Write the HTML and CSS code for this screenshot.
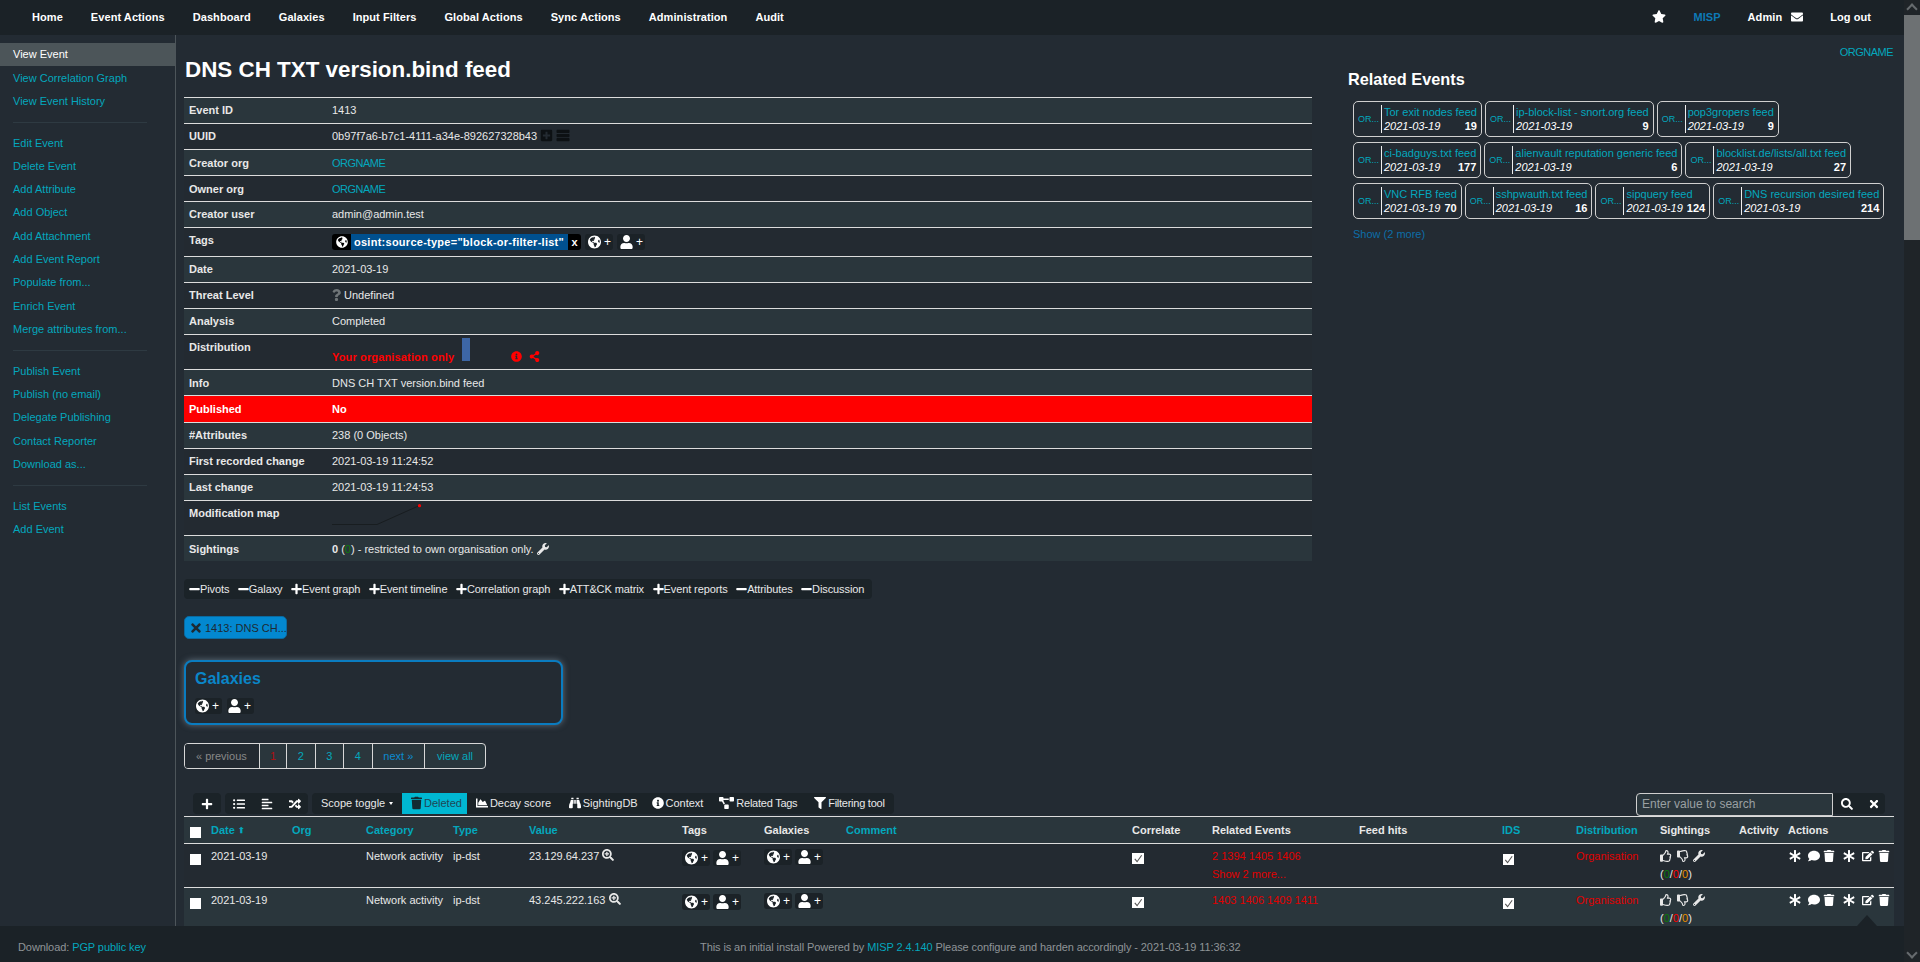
FILE: index.html
```html
<!DOCTYPE html>
<html lang="en">
<head>
<meta charset="utf-8">
<title>MISP - Event 1413</title>
<link rel="stylesheet" href="styles.css">
</head>
<body>
<svg class="defs" aria-hidden="true">
<symbol id="plus" viewBox="0 0 448 512"><path d="M416 208H272V64c0-17.67-14.33-32-32-32h-32c-17.67 0-32 14.33-32 32v144H32c-17.67 0-32 14.33-32 32v32c0 17.67 14.33 32 32 32h144v144c0 17.67 14.33 32 32 32h32c17.67 0 32-14.33 32-32V304h144c17.67 0 32-14.33 32-32v-32c0-17.67-14.33-32-32-32z"/></symbol>
<symbol id="minus" viewBox="0 0 448 512"><path d="M416 208H32c-17.67 0-32 14.33-32 32v32c0 17.67 14.33 32 32 32h384c17.67 0 32-14.33 32-32v-32c0-17.67-14.33-32-32-32z"/></symbol>
<symbol id="user" viewBox="0 0 448 512"><path d="M224 256c70.7 0 128-57.3 128-128S294.7 0 224 0 96 57.3 96 128s57.3 128 128 128zm89.6 32h-16.7c-22.2 10.2-46.9 16-72.9 16s-50.6-5.8-72.9-16h-16.7C60.2 288 0 348.2 0 422.4V464c0 26.5 21.5 48 48 48h352c26.5 0 48-21.5 48-48v-41.6c0-74.2-60.2-134.4-134.4-134.4z"/></symbol>
<symbol id="globe" viewBox="0 0 496 512"><path d="M248 8C111.03 8 0 119.03 0 256s111.03 248 248 248 248-111.03 248-248S384.97 8 248 8zm82.29 357.6c-3.9 3.88-7.99 7.95-11.31 11.28-2.99 3-5.1 6.7-6.17 10.71-1.51 5.66-2.73 11.38-4.77 16.87l-17.39 46.85c-13.76 3-28 4.69-42.65 4.69v-27.38c1.69-12.62-7.64-36.26-22.63-51.25-6-6-9.37-14.14-9.37-22.63v-32.01c0-11.64-6.27-22.34-16.46-27.97-14.37-7.95-34.81-19.06-48.81-26.11-11.48-5.78-22.1-13.14-31.65-21.75l-.8-.72a114.792 114.792 0 0 1-18.06-20.74c-9.38-13.77-24.66-36.42-34.59-51.14 20.47-45.5 57.36-82.04 103.2-101.89l24.01 12.01C203.48 89.74 216 82.01 216 70.11v-11.3c7.99-1.29 16.12-2.11 24.39-2.42l28.3 28.3c6.25 6.25 6.25 16.38 0 22.63L264 112l-10.34 10.34c-3.12 3.12-3.12 8.19 0 11.31l4.69 4.69c3.12 3.12 3.12 8.19 0 11.31l-8 8a8.008 8.008 0 0 1-5.66 2.34h-8.99c-2.08 0-4.08.81-5.58 2.27l-9.92 9.65a8.008 8.008 0 0 0-1.58 9.31l15.59 31.19c2.66 5.32-1.21 11.58-7.15 11.58h-5.64c-1.93 0-3.79-.7-5.24-1.96l-9.28-8.06a16.017 16.017 0 0 0-15.55-3.1l-31.17 10.39a11.95 11.95 0 0 0-8.17 11.34c0 4.53 2.56 8.66 6.61 10.69l11.08 5.54c9.41 4.71 19.79 7.16 30.31 7.16s22.59 27.29 32 32h66.75c8.49 0 16.62 3.37 22.63 9.37l13.69 13.69a30.503 30.503 0 0 1 8.93 21.57 46.536 46.536 0 0 1-13.72 32.98zM417 274.25c-5.79-1.45-10.84-5-14.15-9.97l-17.98-26.97a23.97 23.97 0 0 1 0-26.62l19.59-29.38c2.32-3.47 5.5-6.29 9.24-8.15l12.98-6.49C440.2 193.59 448 223.87 448 256c0 8.67-.74 17.16-1.82 25.54L417 274.25z"/></symbol>
<symbol id="star" viewBox="0 0 576 512"><path d="M259.3 17.8L194 150.2 47.9 171.5c-26.2 3.8-36.7 36.1-17.7 54.6l105.7 103-25 145.5c-4.5 26.3 23.2 46 46.4 33.7L288 439.6l130.7 68.7c23.2 12.2 50.9-7.4 46.4-33.7l-25-145.5 105.7-103c19-18.5 8.5-50.8-17.7-54.6L382 150.2 316.7 17.8c-11.7-23.6-45.6-23.9-57.4 0z"/></symbol>
<symbol id="envelope" viewBox="0 0 512 512"><path d="M502.3 190.8c3.9-3.1 9.7-.2 9.7 4.7V400c0 26.5-21.5 48-48 48H48c-26.5 0-48-21.5-48-48V195.6c0-5 5.7-7.8 9.7-4.7 22.4 17.4 52.1 39.5 154.1 113.6 21.1 15.4 56.7 47.8 92.2 47.6 35.7.3 72-32.8 92.3-47.6 102-74.1 131.6-96.3 154-113.7zM256 320c23.2.4 56.6-29.2 73.4-41.4 132.7-96.3 142.8-104.7 173.4-128.7 5.8-4.5 9.2-11.5 9.2-18.9v-19c0-26.5-21.5-48-48-48H48C21.5 64 0 85.5 0 112v19c0 7.4 3.4 14.3 9.2 18.9 30.6 23.9 40.7 32.4 173.4 128.7 16.8 12.2 50.2 41.8 73.4 41.4z"/></symbol>
<symbol id="info" viewBox="0 0 512 512"><path d="M256 8C119 8 8 119 8 256s111 248 248 248 248-111 248-248S393 8 256 8zm0 110c23.2 0 42 18.8 42 42s-18.8 42-42 42-42-18.8-42-42 18.8-42 42-42zm56 254c0 6.6-5.4 12-12 12h-88c-6.6 0-12-5.4-12-12v-24c0-6.6 5.4-12 12-12h12v-64h-12c-6.6 0-12-5.4-12-12v-24c0-6.6 5.4-12 12-12h64c6.6 0 12 5.4 12 12v100h12c6.6 0 12 5.4 12 12v24z"/></symbol>
<symbol id="share" viewBox="0 0 448 512"><path d="M352 320c-22.6 0-43.4 7.8-59.8 20.9l-102.5-64.1a96.6 96.6 0 0 0 0-41.7l102.5-64.1C308.6 184.2 329.4 192 352 192c53 0 96-43 96-96S405 0 352 0s-96 43-96 96c0 7.2.8 14.1 2.3 20.8L155.8 181C139.4 167.8 118.6 160 96 160c-53 0-96 43-96 96s43 96 96 96c22.6 0 43.4-7.8 59.8-20.9l102.5 64.1A96.3 96.3 0 0 0 256 416c0 53 43 96 96 96s96-43 96-96-43-96-96-96z"/></symbol>
<symbol id="wrench" viewBox="0 0 512 512"><path d="M507.73 109.1c-2.24-9.03-13.54-12.09-20.12-5.51l-74.36 74.36-67.88-11.31-11.31-67.88 74.36-74.36c6.62-6.62 3.43-17.9-5.66-20.16-47.38-11.74-99.55.91-136.58 37.93-39.64 39.64-50.55 97.1-34.05 147.2L18.74 402.76c-24.99 24.99-24.99 65.51 0 90.5 24.99 24.99 65.51 24.99 90.5 0l213.21-213.21c50.12 16.71 107.47 5.68 147.37-34.22 37.07-37.07 49.7-89.32 37.91-136.73zM64 472c-13.25 0-24-10.75-24-24 0-13.26 10.75-24 24-24s24 10.74 24 24c0 13.25-10.75 24-24 24z"/></symbol>
<symbol id="trash" viewBox="0 0 448 512"><path d="M432 32H312l-9.4-18.7A24 24 0 0 0 281.1 0H166.8a23.72 23.72 0 0 0-21.4 13.3L136 32H16A16 16 0 0 0 0 48v32a16 16 0 0 0 16 16h416a16 16 0 0 0 16-16V48a16 16 0 0 0-16-16zM53.2 467a48 48 0 0 0 47.9 45h245.8a48 48 0 0 0 47.9-45L416 128H32z"/></symbol>
<symbol id="asterisk" viewBox="0 0 512 512"><path d="M478.21 334.093L336 256l142.21-78.093c11.795-6.477 15.961-21.384 9.232-33.037l-19.48-33.741c-6.728-11.653-21.72-15.499-33.227-8.523L296 186.718l3.475-162.204C299.763 11.061 288.937 0 275.48 0h-38.96c-13.456 0-24.283 11.061-23.994 24.514L216 186.718 77.265 102.607c-11.506-6.976-26.499-3.13-33.227 8.523l-19.48 33.741c-6.728 11.653-2.562 26.56 9.233 33.037L176 256 33.79 334.093c-11.795 6.477-15.961 21.384-9.232 33.037l19.48 33.741c6.728 11.653 21.721 15.499 33.227 8.523L216 325.282l-3.475 162.204C212.237 500.939 223.064 512 236.52 512h38.961c13.456 0 24.283-11.061 23.995-24.514L296 325.282l138.735 84.111c11.506 6.976 26.499 3.13 33.227-8.523l19.48-33.741c6.728-11.653 2.563-26.559-9.232-33.036z"/></symbol>
<symbol id="comment" viewBox="0 0 512 512"><path d="M256 32C114.6 32 0 125.1 0 240c0 49.6 21.4 95 57 130.7C44.5 421.1 2.7 466 2.2 466.5c-2.2 2.3-2.8 5.7-1.5 8.7S4.8 480 8 480c66.3 0 116-31.8 140.6-51.4 32.7 12.3 69 19.4 107.4 19.4 141.4 0 256-93.1 256-208S397.4 32 256 32z"/></symbol>
<symbol id="edit" viewBox="0 0 576 512"><path d="M402.6 83.2l90.2 90.2c3.8 3.8 3.8 10 0 13.8L274.4 405.6l-92.8 10.3c-12.4 1.4-22.9-9.1-21.5-21.5l10.3-92.8L388.8 83.2c3.8-3.8 10-3.8 13.8 0zm162-22.9l-48.8-48.8c-15.2-15.2-39.9-15.2-55.2 0l-35.4 35.4c-3.8 3.8-3.8 10 0 13.8l90.2 90.2c3.8 3.8 10 3.8 13.8 0l35.4-35.4c15.2-15.3 15.2-40 0-55.2zM384 346.2V448H64V128h229.8c3.2 0 6.2-1.3 8.5-3.5l40-40c7.6-7.6 2.2-20.5-8.5-20.5H48C21.5 64 0 85.5 0 112v352c0 26.5 21.5 48 48 48h352c26.5 0 48-21.5 48-48V306.2c0-10.7-12.9-16-20.5-8.5l-40 40c-2.2 2.3-3.5 5.3-3.5 8.5z"/></symbol>
<symbol id="search" viewBox="0 0 512 512"><path d="M505 442.7L405.3 343c-4.5-4.5-10.6-7-17-7H372c27.6-35.3 44-79.7 44-128C416 93.1 322.9 0 208 0S0 93.1 0 208s93.1 208 208 208c48.3 0 92.7-16.4 128-44v16.3c0 6.4 2.5 12.5 7 17l99.7 99.7c9.4 9.4 24.6 9.4 33.9 0l28.3-28.3c9.4-9.4 9.4-24.6.1-34zM208 336c-70.7 0-128-57.2-128-128 0-70.7 57.2-128 128-128 70.7 0 128 57.2 128 128 0 70.7-57.2 128-128 128z"/></symbol>
<symbol id="searchplus" viewBox="0 0 512 512"><path d="M304 192v32c0 6.6-5.4 12-12 12h-56v56c0 6.6-5.4 12-12 12h-32c-6.6 0-12-5.4-12-12v-56h-56c-6.6 0-12-5.4-12-12v-32c0-6.6 5.4-12 12-12h56v-56c0-6.6 5.4-12 12-12h32c6.6 0 12 5.4 12 12v56h56c6.6 0 12 5.4 12 12zm201 284.7L476.7 505c-9.4 9.4-24.6 9.4-33.9 0L343 405.3c-4.5-4.5-7-10.6-7-17V372c-35.3 27.6-79.7 44-128 44C93.1 416 0 322.9 0 208S93.1 0 208 0s208 93.1 208 208c0 48.3-16.4 92.7-44 128h16.3c6.4 0 12.5 2.5 17 7l99.7 99.7c9.3 9.4 9.3 24.6 0 34zM344 208c0-75.2-60.8-136-136-136S72 132.8 72 208s60.8 136 136 136 136-60.8 136-136z"/></symbol>
<symbol id="times" viewBox="0 0 352 512"><path d="M242.72 256l100.07-100.07c12.28-12.28 12.28-32.19 0-44.48l-22.24-22.24c-12.28-12.28-32.19-12.28-44.48 0L176 189.28 75.93 89.21c-12.28-12.28-32.19-12.28-44.48 0L9.21 111.45c-12.28 12.28-12.28 32.19 0 44.48L109.28 256 9.21 356.07c-12.28 12.28-12.28 32.19 0 44.48l22.24 22.24c12.28 12.28 32.2 12.28 44.48 0L176 322.72l100.07 100.07c12.28 12.28 32.2 12.28 44.48 0l22.24-22.24c12.28-12.28 12.28-32.19 0-44.48L242.72 256z"/></symbol>
<symbol id="random" viewBox="0 0 512 512"><path d="M504.971 359.029c9.373 9.373 9.373 24.569 0 33.941l-80 79.984c-15.01 15.01-40.971 4.49-40.971-16.971V416h-58.785a12.004 12.004 0 0 1-8.773-3.812l-70.556-75.596 53.333-57.143L352 336h32v-39.981c0-21.438 25.943-31.998 40.971-16.971l80 79.981zM12 176h84l52.781 56.551 53.333-57.143-70.556-75.596A11.999 11.999 0 0 0 122.785 96H12c-6.627 0-12 5.373-12 12v56c0 6.627 5.373 12 12 12zm372 0v39.984c0 21.46 25.961 31.98 40.971 16.971l80-79.984c9.373-9.373 9.373-24.569 0-33.941l-80-79.981C409.943 24.021 384 34.582 384 56.019V96h-58.785a12.004 12.004 0 0 0-8.773 3.812L96 336H12c-6.627 0-12 5.373-12 12v56c0 6.627 5.373 12 12 12h110.785c3.326 0 6.503-1.381 8.773-3.812L352 176h32z"/></symbol>
<symbol id="filter" viewBox="0 0 512 512"><path d="M487.976 0H24.028C2.71 0-8.047 25.866 7.058 40.971L192 225.941V432c0 7.831 3.821 15.17 10.237 19.662l80 55.98C298.02 518.69 320 507.493 320 487.98V225.941l184.947-184.97C520.021 25.896 509.338 0 487.976 0z"/></symbol>
<symbol id="chart" viewBox="0 0 512 512"><path d="M500 384c6.6 0 12 5.4 12 12v40c0 6.6-5.4 12-12 12H12c-6.6 0-12-5.4-12-12V76c0-6.6 5.4-12 12-12h40c6.6 0 12 5.4 12 12v308h436zM372.7 159.5L288 216l-85.3-113.7c-5.1-6.8-15.5-6.3-19.9 1L96 248v104h384l-89.9-187.8c-3.2-6.5-11.4-8.7-17.4-4.7z"/></symbol>
<symbol id="binoculars" viewBox="0 0 512 512"><path d="M416 48c0-8.84-7.16-16-16-16h-64c-8.84 0-16 7.16-16 16v48h96V48zM63.91 159.99C61.4 253.84 3.46 274.22 0 404v44c0 17.67 14.33 32 32 32h96c17.67 0 32-14.33 32-32V288h32V128H95.84c-17.63 0-31.45 14.37-31.93 31.99zm384.18 0c-.48-17.62-14.3-31.99-31.93-31.99H320v160h32v160c0 17.67 14.33 32 32 32h96c17.67 0 32-14.33 32-32v-44c-3.46-129.78-61.4-150.16-63.91-244.01zM176 32h-64c-8.84 0-16 7.16-16 16v48h96V48c0-8.84-7.16-16-16-16zm48 256h64V128h-64v160z"/></symbol>
<symbol id="diagram" viewBox="0 0 640 512"><path d="M384 320H256c-17.67 0-32 14.33-32 32v128c0 17.67 14.33 32 32 32h128c17.67 0 32-14.33 32-32V352c0-17.67-14.33-32-32-32zM192 32c0-17.67-14.33-32-32-32H32C14.33 0 0 14.33 0 32v128c0 17.67 14.33 32 32 32h95.72l73.16 128.04C211.98 300.98 232.4 288 256 288h.28L192 175.51V128h224V64H192V32zM608 0H480c-17.67 0-32 14.33-32 32v128c0 17.67 14.33 32 32 32h128c17.67 0 32-14.33 32-32V32c0-17.67-14.33-32-32-32z"/></symbol>
<symbol id="question" viewBox="0 0 384 512"><path d="M202.021 0C122.202 0 70.503 32.703 29.914 91.026c-7.363 10.58-5.093 25.086 5.178 32.874l43.138 32.709c10.373 7.865 25.132 6.026 33.253-4.148 25.049-31.381 43.63-49.449 82.757-49.449 30.764 0 68.816 19.799 68.816 49.631 0 22.552-18.617 34.134-48.993 51.164-35.423 19.86-82.299 44.576-82.299 106.405V320c0 13.255 10.745 24 24 24h72.471c13.255 0 24-10.745 24-24v-5.773c0-42.86 125.268-44.645 125.268-160.627C377.504 66.256 286.902 0 202.021 0zM192 373.459c-38.196 0-69.271 31.075-69.271 69.271 0 38.195 31.075 69.27 69.271 69.27s69.271-31.075 69.271-69.271-31.075-69.27-69.271-69.27z"/></symbol>
<symbol id="list" viewBox="0 0 512 512"><path d="M48 48a48 48 0 1 0 48 48 48 48 0 0 0-48-48zm0 160a48 48 0 1 0 48 48 48 48 0 0 0-48-48zm0 160a48 48 0 1 0 48 48 48 48 0 0 0-48-48zm448 16H176a16 16 0 0 0-16 16v32a16 16 0 0 0 16 16h320a16 16 0 0 0 16-16v-32a16 16 0 0 0-16-16zm0-320H176a16 16 0 0 0-16 16v32a16 16 0 0 0 16 16h320a16 16 0 0 0 16-16V80a16 16 0 0 0-16-16zm0 160H176a16 16 0 0 0-16 16v32a16 16 0 0 0 16 16h320a16 16 0 0 0 16-16v-32a16 16 0 0 0-16-16z"/></symbol>
<symbol id="alignleft" viewBox="0 0 448 512"><path d="M12.83 352h262.34A12.82 12.82 0 0 0 288 339.17v-38.34A12.82 12.82 0 0 0 275.17 288H12.83A12.82 12.82 0 0 0 0 300.83v38.34A12.82 12.82 0 0 0 12.83 352zm0-256h262.34A12.82 12.82 0 0 0 288 83.17V44.83A12.82 12.82 0 0 0 275.17 32H12.83A12.82 12.82 0 0 0 0 44.83v38.34A12.82 12.82 0 0 0 12.83 96zM432 160H16a16 16 0 0 0-16 16v32a16 16 0 0 0 16 16h416a16 16 0 0 0 16-16v-32a16 16 0 0 0-16-16zm0 256H16a16 16 0 0 0-16 16v32a16 16 0 0 0 16 16h416a16 16 0 0 0 16-16v-32a16 16 0 0 0-16-16z"/></symbol>
<symbol id="thumbup" viewBox="0 0 512 512"><path d="M466.27 286.69C475.04 271.84 480 256 480 236.85c0-44.015-37.218-85.58-85.82-85.58H357.7c4.92-12.81 8.85-28.13 8.85-46.54C366.55 31.936 328.86 0 271.28 0c-61.607 0-58.093 94.933-71.76 108.6-22.747 22.747-49.615 66.447-68.76 83.4H32c-17.673 0-32 14.327-32 32v240c0 17.673 14.327 32 32 32h64c14.893 0 27.408-10.174 30.978-23.95 44.509 1.001 75.06 39.94 177.802 39.94 7.22 0 15.22.01 22.22.01 77.117 0 111.986-39.423 112.94-95.33 13.319-18.425 20.299-43.122 17.34-66.99 9.854-18.452 13.664-40.343 8.99-62.99zm-61.75 53.83c12.56 21.13 1.26 49.41-13.94 57.57 7.7 48.78-17.608 65.9-53.12 65.9h-37.82c-71.639 0-118.029-37.82-171.64-37.82V240h10.92c28.36 0 67.98-70.89 94.54-97.46 28.36-28.36 18.91-75.63 37.82-94.54 47.27 0 47.27 32.98 47.27 56.73 0 39.17-28.36 56.72-28.36 94.54h103.99c21.11 0 37.73 18.91 37.82 37.82.09 18.9-12.82 37.81-28.36 37.81 14.33 21.49 2.83 52.58-10.57 66.42z" fill-rule="evenodd"/></symbol>
<symbol id="plussquare" viewBox="0 0 448 512"><path d="M400 32H48C21.5 32 0 53.5 0 80v352c0 26.5 21.5 48 48 48h352c26.5 0 48-21.5 48-48V80c0-26.5-21.5-48-48-48zm-32 252c0 6.6-5.4 12-12 12h-92v92c0 6.6-5.4 12-12 12h-56c-6.6 0-12-5.4-12-12v-92H92c-6.6 0-12-5.4-12-12v-56c0-6.6 5.4-12 12-12h92v-92c0-6.6 5.4-12 12-12h56c6.6 0 12 5.4 12 12v92h92c6.6 0 12 5.4 12 12v56z"/></symbol>
<symbol id="server" viewBox="0 0 512 512"><path d="M480 160H32c-17.67 0-32-14.33-32-32V64c0-17.67 14.33-32 32-32h448c17.67 0 32 14.33 32 32v64c0 17.67-14.33 32-32 32zm0 160H32c-17.67 0-32-14.33-32-32v-64c0-17.67 14.33-32 32-32h448c17.67 0 32 14.33 32 32v64c0 17.67-14.33 32-32 32zm0 160H32c-17.67 0-32-14.33-32-32v-64c0-17.67 14.33-32 32-32h448c17.67 0 32 14.33 32 32v64c0 17.67-14.33 32-32 32z"/></symbol>
<symbol id="check" viewBox="0 0 12 12"><path d="M2.5 6.5 5 9.5 10 2.5" fill="none" stroke="#555" stroke-width="1.2"/></symbol>
</svg>

<div class="app">
  <div class="window">
    <nav class="navbar">
      <ul class="nav-left">
        <li>Home</li><li>Event Actions</li><li>Dashboard</li><li>Galaxies</li><li>Input Filters</li><li>Global Actions</li><li>Sync Actions</li><li>Administration</li><li>Audit</li>
      </ul>
      <ul class="nav-right">
        <li class="nav-star"><svg class="i i-star"><use href="#star"/></svg></li>
        <li class="nav-misp">MISP</li>
        <li class="nav-admin">Admin <svg class="i i-env"><use href="#envelope"/></svg></li>
        <li class="nav-logout">Log out</li>
      </ul>
    </nav>

    <div class="middle">
      <aside class="sidebar">
        <a class="side-active">View Event</a>
        <a>View Correlation Graph</a>
        <a>View Event History</a>
        <hr>
        <a>Edit Event</a>
        <a>Delete Event</a>
        <a>Add Attribute</a>
        <a>Add Object</a>
        <a>Add Attachment</a>
        <a>Add Event Report</a>
        <a>Populate from...</a>
        <a>Enrich Event</a>
        <a>Merge attributes from...</a>
        <hr>
        <a>Publish Event</a>
        <a>Publish (no email)</a>
        <a>Delegate Publishing</a>
        <a>Contact Reporter</a>
        <a>Download as...</a>
        <hr>
        <a>List Events</a>
        <a>Add Event</a>
      </aside>

      <main class="content">
        <div class="event-top">
          <section class="event-left">
            <h2 class="title">DNS CH TXT version.bind feed</h2>
            <table class="meta">
              <tr><th>Event ID</th><td>1413</td></tr>
              <tr><th>UUID</th><td class="uuid">0b97f7a6-b7c1-4111-a34e-892627328b43 <svg class="i i-dark"><use href="#plussquare"/></svg> <svg class="i i-dark i-server"><use href="#server"/></svg></td></tr>
              <tr class="row-low"><th>Creator org</th><td><a class="link">ORGNAME</a></td></tr>
              <tr class="row-low"><th>Owner org</th><td><a class="link">ORGNAME</a></td></tr>
              <tr><th>Creator user</th><td>admin@admin.test</td></tr>
              <tr class="row-tags"><th>Tags</th><td>
                <div class="tag-line">
                  <span class="tag"><span class="tag-globe"><svg class="i"><use href="#globe"/></svg></span><span class="tag-name">osint:source-type="block-or-filter-list"</span><span class="tag-x">x</span></span>
                  <span class="pill"><svg class="i"><use href="#globe"/></svg> +</span>
                  <span class="pill"><svg class="i"><use href="#user"/></svg> +</span>
                </div>
              </td></tr>
              <tr><th>Date</th><td>2021-03-19</td></tr>
              <tr><th>Threat Level</th><td><svg class="i i-q"><use href="#question"/></svg> Undefined</td></tr>
              <tr><th>Analysis</th><td>Completed</td></tr>
              <tr class="row-dist"><th>Distribution</th><td>
                <div class="dist">
                  <span class="dist-text">Your organisation only</span>
                  <span class="dist-bar"></span>
                  <span class="dist-icons"><svg class="i"><use href="#info"/></svg><svg class="i"><use href="#share"/></svg></span>
                </div>
              </td></tr>
              <tr class="row-low"><th>Info</th><td>DNS CH TXT version.bind feed</td></tr>
              <tr class="row-pub row-low"><th>Published</th><td>No</td></tr>
              <tr><th>#Attributes</th><td>238 (0 Objects)</td></tr>
              <tr><th>First recorded change</th><td>2021-03-19 11:24:52</td></tr>
              <tr><th>Last change</th><td>2021-03-19 11:24:53</td></tr>
              <tr class="row-map"><th>Modification map</th><td>
                <svg class="modmap" viewBox="0 0 90 24"><path d="M0 21.5H45L87.5 2.5" fill="none" stroke="#181d20" stroke-width="1"/><circle cx="87.5" cy="2.7" r="1.6" fill="#f00"/></svg>
              </td></tr>
              <tr class="row-low"><th>Sightings</th><td><b>0</b> (<span class="g">0</span>) - restricted to own organisation only. <svg class="i"><use href="#wrench"/></svg></td></tr>
            </table>
          </section>
          <section class="event-right">
            <div class="orgline"><a class="link">ORGNAME</a></div>
            <h3 class="rel-title">Related Events</h3>
            <div class="rel-row">
              <div class="rel"><span class="rel-org">OR...</span><div class="rel-body"><a>Tor exit nodes feed</a><div class="rel-meta"><i>2021-03-19</i><b>19</b></div></div></div>
              <div class="rel"><span class="rel-org">OR...</span><div class="rel-body"><a>ip-block-list - snort.org feed</a><div class="rel-meta"><i>2021-03-19</i><b>9</b></div></div></div>
              <div class="rel"><span class="rel-org">OR...</span><div class="rel-body"><a>pop3gropers feed</a><div class="rel-meta"><i>2021-03-19</i><b>9</b></div></div></div>
            </div>
            <div class="rel-row">
              <div class="rel"><span class="rel-org">OR...</span><div class="rel-body"><a>ci-badguys.txt feed</a><div class="rel-meta"><i>2021-03-19</i><b>177</b></div></div></div>
              <div class="rel"><span class="rel-org">OR...</span><div class="rel-body"><a>alienvault reputation generic feed</a><div class="rel-meta"><i>2021-03-19</i><b>6</b></div></div></div>
              <div class="rel"><span class="rel-org">OR...</span><div class="rel-body"><a>blocklist.de/lists/all.txt feed</a><div class="rel-meta"><i>2021-03-19</i><b>27</b></div></div></div>
            </div>
            <div class="rel-row">
              <div class="rel"><span class="rel-org">OR...</span><div class="rel-body"><a>VNC RFB feed</a><div class="rel-meta"><i>2021-03-19</i><b>70</b></div></div></div>
              <div class="rel"><span class="rel-org">OR...</span><div class="rel-body"><a>sshpwauth.txt feed</a><div class="rel-meta"><i>2021-03-19</i><b>16</b></div></div></div>
              <div class="rel"><span class="rel-org">OR...</span><div class="rel-body"><a>sipquery feed</a><div class="rel-meta"><i>2021-03-19</i><b>124</b></div></div></div>
              <div class="rel"><span class="rel-org">OR...</span><div class="rel-body"><a>DNS recursion desired feed</a><div class="rel-meta"><i>2021-03-19</i><b>214</b></div></div></div>
            </div>
            <a class="show-more">Show (2 more)</a>
          </section>
        </div>

        <div class="tabs">
          <span><svg class="i"><use href="#minus"/></svg>Pivots</span>
          <span><svg class="i"><use href="#minus"/></svg>Galaxy</span>
          <span><svg class="i"><use href="#plus"/></svg>Event graph</span>
          <span><svg class="i"><use href="#plus"/></svg>Event timeline</span>
          <span><svg class="i"><use href="#plus"/></svg>Correlation graph</span>
          <span><svg class="i"><use href="#plus"/></svg>ATT&amp;CK matrix</span>
          <span><svg class="i"><use href="#plus"/></svg>Event reports</span>
          <span><svg class="i"><use href="#minus"/></svg>Attributes</span>
          <span><svg class="i"><use href="#minus"/></svg>Discussion</span>
        </div>

        <div class="chip"><svg class="i"><use href="#times"/></svg> 1413: DNS CH...</div>

        <section class="galaxies">
          <h4>Galaxies</h4>
          <div class="gal-pills">
            <span class="pill"><svg class="i"><use href="#globe"/></svg> +</span>
            <span class="pill"><svg class="i"><use href="#user"/></svg> +</span>
          </div>
        </section>

        <div class="pager">
          <span class="pg-prev">« previous</span><span class="pg-1">1</span><span>2</span><span>3</span><span>4</span><span class="pg-next">next »</span><span class="pg-all">view all</span>
        </div>

        <div class="toolbar">
          <div class="tb-group tb-add"><svg class="i"><use href="#plus"/></svg></div>
          <div class="tb-group tb-views"><svg class="i"><use href="#list"/></svg><svg class="i"><use href="#alignleft"/></svg><svg class="i"><use href="#random"/></svg></div>
          <div class="tb-group tb-main">
            <span class="tb-scope">Scope toggle <span class="caret"></span></span>
            <span class="tb-deleted"><svg class="i"><use href="#trash"/></svg>Deleted</span>
            <span class="tb-decay"><svg class="i"><use href="#chart"/></svg>Decay score</span>
            <span class="tb-sight"><svg class="i"><use href="#binoculars"/></svg>SightingDB</span>
            <span class="tb-context"><svg class="i"><use href="#info"/></svg>Context</span>
            <span class="tb-related"><svg class="i i-diagram"><use href="#diagram"/></svg>Related Tags</span>
            <span class="tb-filter"><svg class="i"><use href="#filter"/></svg>Filtering tool</span>
          </div>
          <div class="tb-search">
            <div class="search-input">Enter value to search</div>
            <div class="search-btns"><svg class="i"><use href="#search"/></svg><svg class="i"><use href="#times"/></svg></div>
          </div>
        </div>

        <table class="attrs">
          <colgroup><col><col><col><col><col><col><col><col><col><col><col><col><col><col><col><col><col></colgroup>
          <tr>
            <th><span class="cb"></span></th>
            <th><a class="link">Date <span class="sort">⬆</span></a></th><th><a class="link">Org</a></th><th><a class="link">Category</a></th><th><a class="link">Type</a></th><th><a class="link">Value</a></th>
            <th>Tags</th><th>Galaxies</th><th><a class="link">Comment</a></th><th>Correlate</th><th>Related Events</th><th>Feed hits</th>
            <th><a class="link">IDS</a></th><th><a class="link">Distribution</a></th><th>Sightings</th><th>Activity</th><th>Actions</th>
          </tr>
          <tr>
            <td><span class="cb"></span></td><td>2021-03-19</td><td></td><td>Network activity</td><td>ip-dst</td>
            <td>23.129.64.237 <svg class="i i-mag"><use href="#searchplus"/></svg></td>
            <td><div class="pills pills-tags"><span class="pill"><svg class="i"><use href="#globe"/></svg> +</span><span class="pill"><svg class="i"><use href="#user"/></svg> +</span></div></td>
            <td><div class="pills"><span class="pill"><svg class="i"><use href="#globe"/></svg> +</span><span class="pill"><svg class="i"><use href="#user"/></svg> +</span></div></td>
            <td></td>
            <td><span class="cb cb-on"><svg><use href="#check"/></svg></span></td>
            <td class="red">2 1394 1405 1406<div class="line2">Show 2 more...</div></td>
            <td></td>
            <td><span class="cb cb-ids"><svg><use href="#check"/></svg></span></td>
            <td class="red">Organisation</td>
            <td><div class="sight"><svg class="i"><use href="#thumbup"/></svg><svg class="i flip"><use href="#thumbup"/></svg><svg class="i"><use href="#wrench"/></svg></div><div class="line2">(<span class="g">0</span>/<span class="r">0</span>/<span class="o">0</span>)</div></td>
            <td></td>
            <td><div class="acts"><svg class="i"><use href="#asterisk"/></svg><svg class="i"><use href="#comment"/></svg><svg class="i"><use href="#trash"/></svg><span class="sep"></span><svg class="i"><use href="#asterisk"/></svg><svg class="i"><use href="#edit"/></svg><svg class="i"><use href="#trash"/></svg></div></td>
          </tr>
          <tr>
            <td><span class="cb"></span></td><td>2021-03-19</td><td></td><td>Network activity</td><td>ip-dst</td>
            <td>43.245.222.163 <svg class="i i-mag"><use href="#searchplus"/></svg></td>
            <td><div class="pills pills-tags"><span class="pill"><svg class="i"><use href="#globe"/></svg> +</span><span class="pill"><svg class="i"><use href="#user"/></svg> +</span></div></td>
            <td><div class="pills"><span class="pill"><svg class="i"><use href="#globe"/></svg> +</span><span class="pill"><svg class="i"><use href="#user"/></svg> +</span></div></td>
            <td></td>
            <td><span class="cb cb-on"><svg><use href="#check"/></svg></span></td>
            <td class="red">1403 1406 1409 1411</td>
            <td></td>
            <td><span class="cb cb-ids"><svg><use href="#check"/></svg></span></td>
            <td class="red">Organisation</td>
            <td><div class="sight"><svg class="i"><use href="#thumbup"/></svg><svg class="i flip"><use href="#thumbup"/></svg><svg class="i"><use href="#wrench"/></svg></div><div class="line2">(<span class="g">0</span>/<span class="r">0</span>/<span class="o">0</span>)</div></td>
            <td></td>
            <td><div class="acts"><svg class="i"><use href="#asterisk"/></svg><svg class="i"><use href="#comment"/></svg><svg class="i"><use href="#trash"/></svg><span class="sep"></span><svg class="i"><use href="#asterisk"/></svg><svg class="i"><use href="#edit"/></svg><svg class="i"><use href="#trash"/></svg></div></td>
          </tr>
        </table>
      </main>
      <span class="to-top"></span>
    </div>

    <footer class="footer">
      <div class="foot-left">Download: <a class="link">PGP public key</a></div>
      <div class="foot-center">This is an initial install Powered by <a class="link">MISP 2.4.140</a> Please configure and harden accordingly - 2021-03-19 11:36:32</div>
    </footer>
  </div>

  <div class="scrollbar">
    <span class="sb-btn sb-up"></span>
    <span class="sb-thumb"></span>
    <span class="sb-space"></span>
    <span class="sb-btn sb-down"></span>
  </div>
</div>
</body>
</html>
```

FILE: styles.css
```css
* { box-sizing: border-box; }
html, body { margin: 0; padding: 0; height: 100%; overflow: hidden; }
body {
  font-family: "Liberation Sans", Arial, sans-serif;
  font-size: 11px;
  line-height: 20px;
  color: #e8e8e8;
  background: #232b33;
}
.defs { width: 0; height: 0; position: absolute; }
a { text-decoration: none; }
.link { color: #04a7bd; }
.i { width: 12px; height: 12px; fill: currentColor; vertical-align: -2px; flex: none; }
.g { color: #0a7a0a; }
.r { color: #f00; }
.o { color: #e89000; }
.red { color: #e00000; }

.app { display: flex; height: 962px; }
.window { flex: 1; min-width: 0; display: flex; flex-direction: column; }

/* nav */
.navbar {
  height: 35px; flex: none; display: flex; justify-content: space-between; align-items: center;
  padding-bottom: 2px; background: #1b2227; color: #fff; font-weight: bold; font-size: 11px; letter-spacing: .07px;
}
.navbar ul { list-style: none; margin: 0; padding: 0; display: flex; align-items: center; }
.nav-left { padding-left: 18px !important; }
.nav-left li { padding: 0 14px; white-space: nowrap; }
.nav-right { padding-right: 33px !important; }
.nav-star { margin-right: 27px; display: flex; }
.i-star { width: 14px; height: 13px; }
.nav-misp { color: #0d79b6; margin-right: 27px; }
.nav-admin { margin-right: 27px; display: flex; align-items: center; gap: 9px; }
.i-env { width: 12px; height: 12px; }

/* layout */
.middle { flex: 1; min-height: 0; display: flex; position: relative; overflow: hidden; }
.sidebar {
  width: 176px; flex: none; padding-top: 8px; border-right: 1px solid #4d555a; background: #232b33;
  display: flex; flex-direction: column;
}
.sidebar a { display: block; height: 23.3px; line-height: 23.3px; padding-left: 13px; color: #04a7bd; white-space: nowrap; flex: none; }
.sidebar .side-active { background: #4c5559; color: #fff; height: 23px; line-height: 23px; margin-bottom: .6px; }
.sidebar hr { width: 134px; height: 1px; border: 0; margin: 9px 0 8.4px 13px; background: #2e3a42; flex: none; }
.content { flex: 1; min-width: 0; padding: 8px 10px 0 8px; overflow: hidden; }

.event-top { display: flex; }
.event-left { width: 1128px; flex: none; }
.event-right { flex: 1; min-width: 0; padding-left: 36px; }
.title { margin: 1px 0 1px 1px; font-size: 22.4px; line-height: 52px; font-weight: bold; color: #fff; white-space: nowrap; }

/* metadata table */
.meta { width: 1128px; border-collapse: separate; border-spacing: 0; table-layout: fixed; }
.meta th, .meta td {
  height: 26px; padding: 2px 5px; border-top: 1px solid #dcdcdc; text-align: left; vertical-align: top;
  line-height: 20px; background: #232a31;
}
.meta th { width: 143px; font-weight: bold; white-space: nowrap; }
.meta tr:nth-child(odd) th, .meta tr:nth-child(odd) td { background: #2a363c; }
.meta .row-low th, .meta .row-low td { padding-top: 3px; padding-bottom: 1px; }
.meta .link { letter-spacing: -.5px; }
.meta .row-tags th, .meta .row-tags td { height: 29px; }
.meta .row-dist th, .meta .row-dist td, .meta .row-map th, .meta .row-map td { height: 35px; }
.meta .row-pub th, .meta .row-pub td { height: 27px; background: #f00; color: #fff; font-weight: bold; }
.i-dark { color: #0d1114; width: 13px; height: 13px; }
.i-server { width: 14px; }
.i-q { color: #6f7578; width: 9px; }

.tag-line { display: flex; align-items: center; gap: 4px; height: 16px; margin-top: 4px; }
.tag { display: flex; height: 16px; background: #000; border-radius: 3px; overflow: hidden; font-weight: bold; line-height: 16px; color: #fff; }
.tag-globe { width: 19px; display: flex; align-items: center; justify-content: center; }
.tag-name { background: #00508f; padding: 0 4px 0 3px; letter-spacing: .26px; white-space: nowrap; }
.tag-x { width: 13px; text-align: center; }
.pill { display: inline-flex; align-items: center; gap: 3px; height: 16px; padding: 0 2px 0 3px; background: #1b2227; border-radius: 3px; color: #fff; font-size: 12px; line-height: 16px; }
.pill .i { width: 13px; height: 14px; }

.dist { display: flex; align-items: flex-start; height: 27px; }
.dist-text { color: #f00; font-weight: bold; margin-top: 10px; letter-spacing: .15px; }
.dist-bar { width: 8px; height: 23px; margin: 1px 0 0 8px; background: #3d66a5; }
.dist-icons { display: flex; gap: 7px; color: #f00; margin: 14px 0 0 41px; }
.dist-icons .i { width: 11px; height: 11px; }
.modmap { display: block; width: 90px; height: 24px; }

/* related */
.orgline { text-align: right; line-height: 18px; height: 18px; padding-right: 1px; letter-spacing: -.5px; }
.rel-title { margin: 6px 0 10px; font-size: 16.3px; line-height: 24px; font-weight: bold; color: #fff; }
.rel-row { display: flex; gap: 3px; margin: 0 0 5px 5px; }
.rel { display: flex; flex: none; align-items: center; height: 36px; border: 1px solid #d0d0d0; border-radius: 5px; padding: 3px 4px 3px 3px; }
.rel-org { width: 24px; flex: none; font-size: 9px; color: #04a7bd; line-height: 28px; padding-left: 1px; }
.rel-body { border-left: 1px solid #eee; padding-left: 2px; height: 28px; display: flex; flex-direction: column; }
.rel-body a { color: #04a7bd; line-height: 14px; white-space: nowrap; }
.rel-meta { display: flex; justify-content: space-between; gap: 4px; line-height: 14px; color: #fff; white-space: nowrap; }
.show-more { display: block; margin: 1px 0 0 5px; color: #0d6ea8; line-height: 20px; }

/* tabs */
.tabs {
  display: flex; width: 688px; height: 20px; margin-top: 18px; padding-left: 5px; gap: 8.5px; background: #1b2328;
  border-radius: 4px; color: #e8e8e8; line-height: 20px; white-space: nowrap; letter-spacing: -.1px;
}
.tabs span { display: flex; align-items: center; }
.tabs .i { width: 11px; height: 12px; color: #fff; }

.chip {
  display: flex; align-items: center; gap: 3px; width: 103px; height: 23px; margin-top: 17px; padding-left: 5px;
  background: #0388d0; border: 1px solid #0a6aa0; border-radius: 5px; color: #1d2a33; white-space: nowrap;
}
.chip .i { width: 12px; height: 14px; }

.galaxies {
  width: 379px; height: 65px; margin-top: 21px; padding: 5px 9px; border: 2px solid #0a7cc0; border-radius: 8px;
  background: #232b33; box-shadow: 0 0 6px rgba(150,170,185,.55);
}
.galaxies h4 { margin: 0; font-size: 16px; line-height: 24px; color: #0a86c8; font-weight: bold; }
.gal-pills { display: flex; gap: 5px; margin-top: 7px; }
.gal-pills .pill { padding: 0 3px 0 1px; }

/* pager */
.pager {
  display: inline-flex; height: 26px; margin-top: 18px; border: 1px solid #d8d8d8; border-radius: 4px; overflow: hidden;
  vertical-align: top; background: #2a363c; line-height: 24px; color: #04a7bd;
}
.pager span { padding: 0 10.7px; border-left: 1px solid #d8d8d8; display: block; }
.pager .pg-prev { border-left: 0; width: 74px; padding: 0 0 0 11px; background: #232a31; color: #888; }
.pager .pg-1 { color: #b01010; padding: 0 10px; }
.pager .pg-next { color: #0a8cd0; }
.pager .pg-all { color: #04a7bd; padding: 0 12px; }

/* toolbar */
.toolbar { display: flex; align-items: flex-start; height: 21px; margin-top: 24px; padding-left: 9px; gap: 4px; color: #fff; }
.tb-group { display: flex; align-items: center; height: 21px; background: #1b2328; border-radius: 4px; white-space: nowrap; color: #e8e8e8; }
.tb-add { width: 28px; justify-content: center; color: #fff; }
.tb-views { width: 83px; padding-left: 8px; gap: 16px; color: #fff; }
.tb-main { width: 582px; }
.tb-main > span { display: flex; align-items: center; height: 21px; gap: 2px; padding-bottom: 1px; }
.tb-main .i { color: #fff; }
.tb-scope { padding: 0 10px 1px 9px; width: 90px; gap: 4px !important; }
.caret { width: 0; height: 0; border-style: solid; border-width: 3px 2.5px 0; border-color: #fff transparent transparent; margin-top: 1px; }
.tb-main .tb-deleted { width: 65px; padding-left: 9px; background: #00b7d2; color: #1f4655; }
.tb-main .tb-deleted .i { color: #132a33; width: 11px; height: 14px; }
.tb-decay { padding-left: 9px; width: 102px; }
.tb-sight { width: 83px; }
.tb-context { width: 68px; }
.tb-related { width: 95px; letter-spacing: -.25px; }
.tb-filter { width: 80px; letter-spacing: -.25px; }
.i-diagram { width: 15px; }
.tb-search { display: flex; margin-left: auto; margin-right: 9px; }
.search-input {
  width: 197px; height: 23px; border: 1px solid #cfcfcf; border-radius: 4px 0 0 4px; background: #2a363c;
  color: #9aa0a3; font-size: 12px; line-height: 20px; padding-left: 5px;
}
.search-btns { display: flex; align-items: center; gap: 15px; width: 52px; height: 21px; padding-left: 8px; background: #1b2328; border-radius: 0 4px 4px 0; color: #fff; }

/* attributes */
.attrs { width: 1710px; margin-top: 2px; border-collapse: separate; border-spacing: 0; table-layout: fixed; }
.attrs col:nth-child(1) { width: 22px; }
.attrs col:nth-child(2) { width: 81px; }
.attrs col:nth-child(3) { width: 74px; }
.attrs col:nth-child(4) { width: 87px; }
.attrs col:nth-child(5) { width: 76px; }
.attrs col:nth-child(6) { width: 153px; }
.attrs col:nth-child(7) { width: 82px; }
.attrs col:nth-child(8) { width: 82px; }
.attrs col:nth-child(9) { width: 286px; }
.attrs col:nth-child(10) { width: 80px; }
.attrs col:nth-child(11) { width: 147px; }
.attrs col:nth-child(12) { width: 143px; }
.attrs col:nth-child(13) { width: 74px; }
.attrs col:nth-child(14) { width: 84px; }
.attrs col:nth-child(15) { width: 79px; }
.attrs col:nth-child(16) { width: 49px; }
.attrs col:nth-child(17) { width: 111px; }
.attrs th, .attrs td {
  padding: 2px 5px; border-top: 1px solid #dcdcdc; text-align: left; vertical-align: top; line-height: 20px; white-space: nowrap; background: #232a31;
}
.attrs th { height: 27px; padding-top: 3px; font-weight: bold; background: #2a363c; }
.attrs td { height: 44px; }
.attrs tr:nth-child(odd) td { background: #2a363c; }
.attrs .link { font-weight: bold; }
.sort { font-size: 8px; vertical-align: 1px; }
.line2 { line-height: 18px; margin-top: -1px; }
.cb { display: block; width: 11px; height: 11px; margin: 8px 0 0 1px; background: #fff; }
.attrs th .cb { margin-top: 7px; }
.cb-on { margin: 7px 0 0; width: 12px; }
.cb-ids { margin: 8px 0 0 1px; }
.cb svg { display: block; width: 100%; height: 100%; }
.i-mag { vertical-align: -1px; }
.pills { display: flex; gap: 3px; margin-top: 3px; }
.pills-tags { margin-top: 4px; }
.sight { display: flex; gap: 4.5px; height: 20px; align-items: center; }
.flip { transform: rotate(180deg) scaleX(-1); }
.acts { display: flex; height: 20px; align-items: center; color: #fff; }
.acts > :nth-child(1) { margin-left: 1px; }
.acts > :nth-child(2) { margin-left: 7px; }
.acts > :nth-child(3) { margin-left: 3px; }
.acts > :nth-child(4) { margin-left: 2px; }
.acts > :nth-child(5) { margin-left: 6px; }
.acts > :nth-child(6) { margin-left: 7px; }
.acts > :nth-child(7) { margin-left: 4px; }
.acts .sep { width: 1px; height: 14px; background: #666; }

.to-top { position: absolute; right: 27px; bottom: 0; width: 0; height: 0; border-style: solid; border-width: 0 10px 11px; border-color: transparent transparent #1b2227; }

/* footer */
.footer { height: 36px; flex: none; display: flex; align-items: center; padding-top: 5px; background: #1b2227; color: #8f9497; white-space: nowrap; letter-spacing: -.09px; }
.foot-left { width: 700px; padding-left: 18px; }

/* scrollbar */
.scrollbar { width: 16px; flex: none; display: flex; flex-direction: column; background: #1f2428; }
.sb-btn { height: 15px; flex: none; display: flex; align-items: center; justify-content: center; }
.sb-btn::before { content: ""; width: 6px; height: 6px; border-left: 2px solid #666b6e; border-top: 2px solid #666b6e; transform: rotate(45deg); margin-top: 3px; }
.sb-down::before { transform: rotate(225deg); margin-top: -3px; }
.sb-thumb { height: 225px; flex: none; background: #6d7173; }
.sb-space { flex: 1; }
```
